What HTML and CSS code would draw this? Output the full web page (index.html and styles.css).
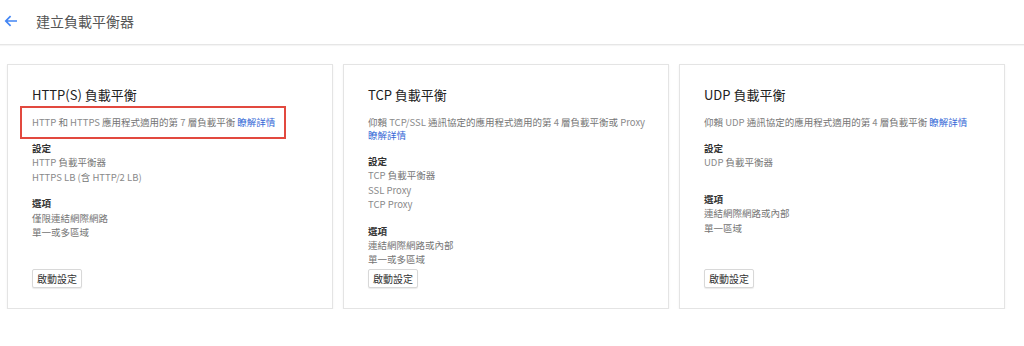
FILE: index.html
```html
<!DOCTYPE html>
<html lang="zh-Hant">
<head>
    <meta charset="UTF-8">
    <meta name="viewport" content="width=device-width, initial-scale=1.0">
    <title>建立負載平衡器</title>
    <link rel="stylesheet" href="styles.css">
</head>
<body>
    <header class="topbar">
        <svg class="back-arrow" viewBox="0 0 14 14" width="14" height="14">
            <path d="M13 7H1.8M6.6 2.2L1.8 7l4.8 4.8" fill="none" stroke="#4285f4" stroke-width="1.7"/>
        </svg>
        <h1 class="page-title">建立負載平衡器</h1>
    </header>

    <main class="cards">
        <section class="card">
            <h2 class="card-title">HTTP(S) 負載平衡</h2>
            <p class="desc highlight"><span class="en">HTTP</span> 和 <span class="en">HTTPS</span> 應用程式適用的第 <span class="en">7</span> 層負載平衡 <a href="#" class="link">瞭解詳情</a></p>
            <div class="section">
                <div class="label">設定</div>
                <div class="item"><span class="en">HTTP</span> 負載平衡器</div>
                <div class="item"><span class="en">HTTPS LB (</span>含 <span class="en">HTTP/2 LB)</span></div>
            </div>
            <div class="section last">
                <div class="label">選項</div>
                <div class="item">僅限連結網際網路</div>
                <div class="item">單一或多區域</div>
            </div>
            <button class="start-btn">啟動設定</button>
        </section>

        <section class="card">
            <h2 class="card-title">TCP 負載平衡</h2>
            <p class="desc">仰賴 <span class="en">TCP/SSL</span> 通訊協定的應用程式適用的第 <span class="en">4</span> 層負載平衡或 <span class="en">Proxy</span> <a href="#" class="link">瞭解詳情</a></p>
            <div class="section">
                <div class="label">設定</div>
                <div class="item"><span class="en">TCP</span> 負載平衡器</div>
                <div class="item en">SSL Proxy</div>
                <div class="item en">TCP Proxy</div>
            </div>
            <div class="section last">
                <div class="label">選項</div>
                <div class="item">連結網際網路或內部</div>
                <div class="item">單一或多區域</div>
            </div>
            <button class="start-btn">啟動設定</button>
        </section>

        <section class="card">
            <h2 class="card-title">UDP 負載平衡</h2>
            <p class="desc">仰賴 <span class="en">UDP</span> 通訊協定的應用程式適用的第 <span class="en">4</span> 層負載平衡 <a href="#" class="link">瞭解詳情</a></p>
            <div class="section loose">
                <div class="label">設定</div>
                <div class="item"><span class="en">UDP</span> 負載平衡器</div>
            </div>
            <div class="section last">
                <div class="label">選項</div>
                <div class="item">連結網際網路或內部</div>
                <div class="item">單一區域</div>
            </div>
            <button class="start-btn">啟動設定</button>
        </section>
    </main>
</body>
</html>
```

FILE: styles.css
```css
body {
    margin: 0;
    padding: 0;
    background: #fff;
    font-family: "Noto Sans CJK TC", "Noto Sans", sans-serif;
    color: #757575;
}

.topbar {
    display: flex;
    align-items: center;
    height: 42px;
    padding: 0 0 2px 4px;
    border-bottom: 1px solid #e6e6e6;
    box-shadow: 0 1px 1px rgba(0, 0, 0, 0.04);
}

.back-arrow {
    display: block;
    margin-right: 18px;
}

.page-title {
    margin: 0;
    font-size: 14px;
    font-weight: normal;
    color: #555;
    line-height: 18px;
}

.cards {
    display: grid;
    grid-template-columns: repeat(3, 326px);
    gap: 10px;
    padding: 19px 0 0 7px;
}

.card {
    display: flex;
    flex-direction: column;
    border: 1px solid #e4e4e4;
    box-shadow: 0 1px 2px rgba(0, 0, 0, 0.06);
    padding: 20px 18px 20px 24px;
    background: #fff;
}

.card-title {
    margin: 0 0 11px;
    font-size: 13px;
    font-weight: normal;
    line-height: 20px;
    color: #212121;
}

.desc {
    margin: 0 0 12px;
    font-size: 9.5px;
    line-height: 13px;
}

.desc.highlight {
    width: fit-content;
    margin: -10px 0 2px -12px;
    padding: 8px 9px 8px 10px;
    border: 2px solid #e2493f;
}

.link {
    color: #3367d6;
    text-decoration: none;
}

.en {
    color: #8a8a8a;
}

.section {
    margin-bottom: 12px;
    font-size: 9.5px;
    line-height: 14.4px;
}

.section.loose {
    margin-bottom: 22px;
}

.section.last {
    margin-bottom: 2px;
}

.label {
    font-weight: bold;
    color: #333;
}

.start-btn {
    align-self: flex-start;
    margin-top: auto;
    height: 19px;
    padding: 0 4px;
    font-family: inherit;
    font-size: 10px;
    line-height: 17px;
    color: #333;
    background: #fff;
    border: 1px solid #d8d8d8;
    border-radius: 2px;
    box-shadow: 0 1px 1px rgba(0, 0, 0, 0.08);
    cursor: pointer;
}
```
